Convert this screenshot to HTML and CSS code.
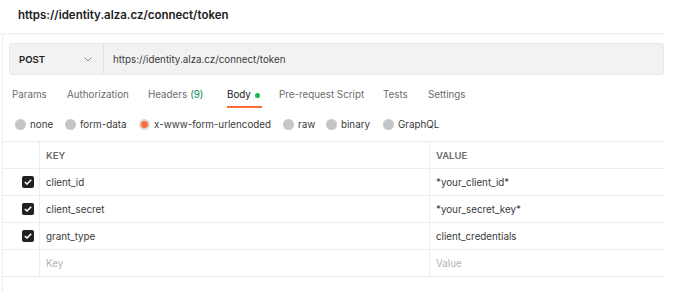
FILE: index.html
```html
<!DOCTYPE html>
<html>
<head>
  <title>Token request</title>
  <meta name="viewport" content="width=device-width,initial-scale=1.0">
  <link rel="stylesheet" href="styles.css">
</head>
<body>

  <div class="title">https://identity.alza.cz/connect/token</div>

  <div class="panel">
    <div class="request">
      <div class="method">
        <span>POST</span>
        <svg class="chevron" width="8" height="5" viewBox="0 0 8 5"><path d="M0.5 0.5 L4 4 L7.5 0.5" fill="none" stroke="#8a8a8a" stroke-width="1"/></svg>
      </div>
      <div class="url">https://identity.alza.cz/connect/token</div>
    </div>

    <div class="tabs">
      <span class="tab t-params">Params</span>
      <span class="tab t-auth">Authorization</span>
      <span class="tab t-headers">Headers <span class="count">(9)</span></span>
      <span class="tab t-body"><span class="active">Body <i class="dot"></i></span></span>
      <span class="tab t-pre">Pre-request Script</span>
      <span class="tab t-tests">Tests</span>
      <span class="tab t-settings">Settings</span>
    </div>

    <div class="radios">
      <label class="radio r-none"><i class="circle"></i>none</label>
      <label class="radio r-form"><i class="circle"></i>form-data</label>
      <label class="radio r-url"><i class="circle on"></i>x-www-form-urlencoded</label>
      <label class="radio r-raw"><i class="circle"></i>raw</label>
      <label class="radio r-bin"><i class="circle"></i>binary</label>
      <label class="radio"><i class="circle"></i>GraphQL</label>
    </div>

    <div class="table">
      <div class="row head">
        <div class="check"></div>
        <div class="key">KEY</div>
        <div class="value">VALUE</div>
      </div>
      <div class="row">
        <div class="check"><i class="box"><svg width="8" height="6" viewBox="0 0 8 6"><path d="M0.8 3 L3 5 L7.2 0.8" fill="none" stroke="#fff" stroke-width="1.6"/></svg></i></div>
        <div class="key">client_id</div>
        <div class="value">*your_client_id*</div>
      </div>
      <div class="row">
        <div class="check"><i class="box"><svg width="8" height="6" viewBox="0 0 8 6"><path d="M0.8 3 L3 5 L7.2 0.8" fill="none" stroke="#fff" stroke-width="1.6"/></svg></i></div>
        <div class="key">client_secret</div>
        <div class="value">*your_secret_key*</div>
      </div>
      <div class="row">
        <div class="check"><i class="box"><svg width="8" height="6" viewBox="0 0 8 6"><path d="M0.8 3 L3 5 L7.2 0.8" fill="none" stroke="#fff" stroke-width="1.6"/></svg></i></div>
        <div class="key">grant_type</div>
        <div class="value">client_credentials</div>
      </div>
      <div class="row empty">
        <div class="check"></div>
        <div class="key">Key</div>
        <div class="value">Value</div>
      </div>
    </div>
  </div>

</body>
</html>
```

FILE: styles.css
```css
body{
  margin: 0;
  background-color: #fff;
  font-family: Inter, "Open Sans", sans-serif;
  font-size: 9.8px;
  color: #212121;
}

.title{
  height: 33px;
  line-height: 31px;
  padding-left: 18px;
  font-weight: 600;
  font-size: 11.5px;
  border-bottom: 2px solid #f3f3f3;
  width: 646px;
}

.panel{
  margin-left: 2px;
  border-left: 1px solid #ededed;
  padding-top: 8px;
  height: 249px;
}

/* request bar */
.request{
  display: flex;
  margin-left: 6px;
  width: 655px;
  height: 32px;
  background-color: #f2f2f2;
  border: 1px solid #e8e8e8;
  border-radius: 3px;
  box-sizing: border-box;
}

.method{
  width: 94px;
  box-sizing: border-box;
  display: flex;
  align-items: center;
  justify-content: space-between;
  padding: 0 11px 0 9px;
  border-right: 1px solid #e3e3e3;
  font-weight: 600;
  font-size: 9.6px;
}

.url{
  display: flex;
  align-items: center;
  padding-left: 9px;
  color: #3a3a3a;
}

/* tabs */
.tabs{
  display: flex;
  padding-left: 9px;
}

.tab{
  display: flex;
  color: #6b6b6b;
}

.tab > span, .tab{
  padding: 14px 0 5px;
  line-height: 12px;
  border-bottom: 2px solid transparent;
}

.tab > span{
  padding: 0 2px 5px 0;
  margin-bottom: -7px;
}

.t-params{ width: 55px; }
.t-auth{ width: 81px; }
.t-headers{ width: 79px; }
.t-body{ width: 52px; }
.t-pre{ width: 104px; }
.t-tests{ width: 45px; }

.count{
  color: #0e8a47;
  margin-left: 3px;
  padding: 0 !important;
  border: 0 !important;
}

.tab .active{
  display: flex;
  align-items: center;
  color: #212121;
  border-bottom-color: #ff6c37;
}

.dot{
  width: 5px;
  height: 5px;
  border-radius: 50%;
  background-color: #0cbb52;
  margin-left: 4px;
}

/* body type radios */
.radios{
  display: flex;
  height: 33px;
  align-items: center;
  padding-left: 12px;
}

.radio{
  display: flex;
  align-items: center;
  color: #3a3a3a;
}

.r-none{ width: 50px; }
.r-form{ width: 74px; }
.r-url{ width: 144px; }
.r-raw{ width: 43px; }
.r-bin{ width: 57px; }

.circle{
  width: 11px;
  height: 11px;
  border-radius: 50%;
  background-color: #c6c6c6;
  margin-right: 4px;
  box-sizing: border-box;
}

.circle.on{
  background-color: #ff6c37;
  border: 2.5px solid #d9d9d9;
}

/* key / value table */
.table{
  width: 662px;
  border-top: 1px solid #ededed;
}

.row{
  display: grid;
  grid-template-columns: 36px 390px 1fr;
  height: 27px;
  border-bottom: 1px solid #ededed;
  box-sizing: border-box;
}

.row > div{
  display: flex;
  align-items: center;
}

.key, .value{
  border-left: 1px solid #ededed;
  padding-left: 6px;
  color: #3a3a3a;
}

.head .key, .head .value{
  font-weight: 600;
  font-size: 9.5px;
  color: #6b6b6b;
}

.empty .key, .empty .value{
  color: #b3b3b3;
}

.check{
  justify-content: flex-end;
  padding-right: 5px;
}

.box{
  width: 12px;
  height: 12px;
  border-radius: 2px;
  background-color: #212121;
  display: flex;
  align-items: center;
  justify-content: center;
}
```
